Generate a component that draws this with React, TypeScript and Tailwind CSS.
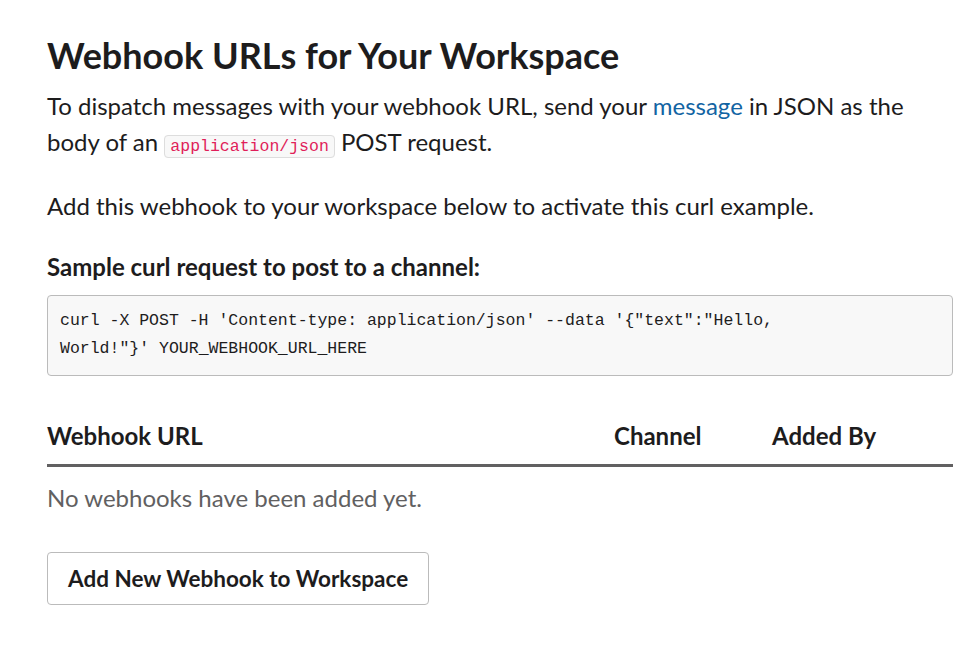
export default function App() {
  return (
    <div className="min-h-screen bg-white text-[#1d1c1d] font-['Lato',sans-serif]">
      <div className="px-[47px] pt-[33px] w-[953px] box-content pr-4">
        <h1 className="text-[36px] font-bold leading-[44px]">Webhook URLs for Your Workspace</h1>
        <p className="mt-[11px] w-[880px] text-[24px] leading-[36px]">
          To dispatch messages with your webhook URL, send your{" "}
          <a className="text-[#1264a3]">message</a> in JSON as the body of an{" "}
          <code className="font-['Liberation_Mono',monospace] text-[16.5px] leading-[20px] text-[#e01e5a] bg-[#f8f8f8] border border-[#dddddd] rounded-[4px] px-[5px] py-[1px]">
            application/json
          </code>{" "}
          POST request.
        </p>
        <p className="mt-[28px] text-[24px] leading-[36px]">Add this webhook to your workspace below to activate this curl example.</p>
        <h3 className="mt-[28px] text-[24px] font-bold leading-[30px]">Sample curl request to post to a channel:</h3>
        <pre className="mt-[13px] w-[906px] bg-[#f8f8f8] border border-[#bbbbbb] rounded-[4px] px-[12px] pt-[11px] pb-[12px] font-['Liberation_Mono',monospace] text-[16.5px] leading-[28px] text-[#1d1c1d] whitespace-pre-wrap">
          curl -X POST -H 'Content-type: application/json' --data '{"{"}"text":"Hello,
          <br />
          World!"{"}"}' YOUR_WEBHOOK_URL_HERE
        </pre>
        <div className="mt-[45px] w-[906px]">
          <div className="grid grid-cols-[567px_158px_1fr] border-b-[3px] border-[#616061] pb-[13px] text-[24px] font-bold leading-[30px]">
            <div>Webhook URL</div>
            <div>Channel</div>
            <div>Added By</div>
          </div>
          <p className="pt-[13px] text-[24px] leading-[36px] text-[#616061]">No webhooks have been added yet.</p>
        </div>
        <button className="mt-[36px] h-[53px] px-[20px] border border-[#bbbbbb] rounded-[4px] bg-white text-[22.5px] font-bold text-[#1d1c1d]">
          Add New Webhook to Workspace
        </button>
      </div>
    </div>
  );
}
